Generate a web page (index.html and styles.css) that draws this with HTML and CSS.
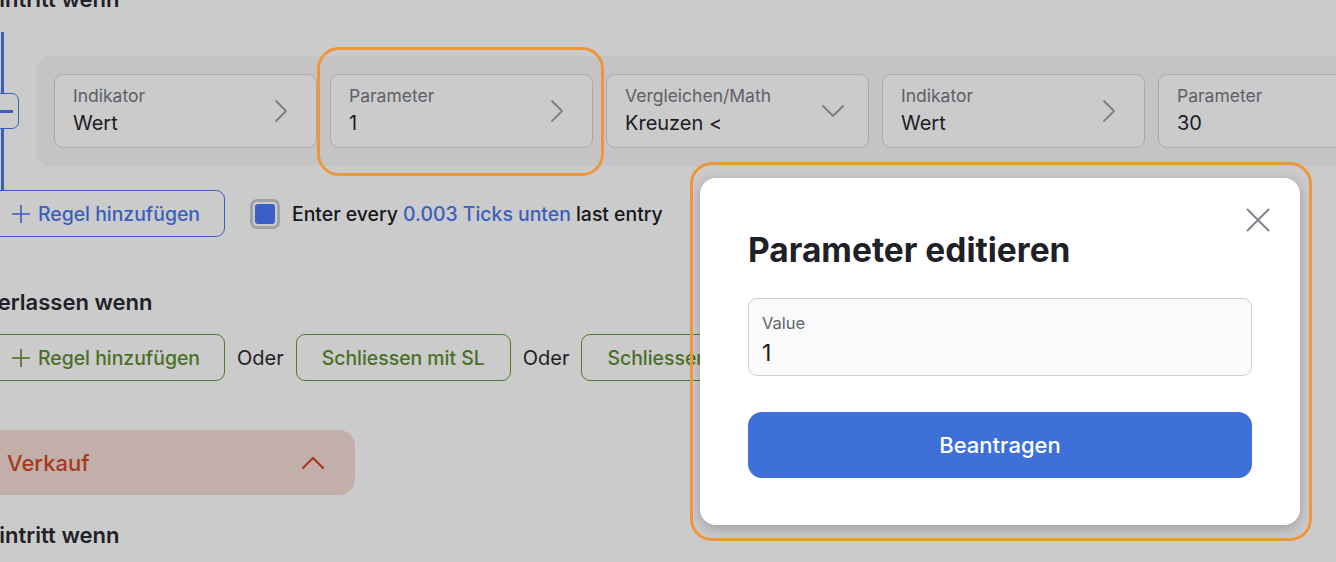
FILE: index.html
```html
<!DOCTYPE html>
<html lang="de">
<head>
<meta charset="utf-8">
<title>Parameter editieren</title>
<link rel="stylesheet" href="styles.css">
</head>
<body>
<main class="page">
  <h3 class="section-title">Eintritt wenn</h3>

  <div class="rule-group">
    <button class="remove-btn" aria-label="Entfernen"><span class="dash"></span></button>
    <div class="condition-panel">
      <div class="field">
        <div class="field-text"><span class="field-label">Indikator</span><span class="field-value">Wert</span></div>
        <svg class="chev-right" viewBox="0 0 14 24" width="14" height="24"><polyline points="2,2 12,12 2,22" /></svg>
      </div>
      <div class="field">
        <div class="field-text"><span class="field-label">Parameter</span><span class="field-value">1</span></div>
        <svg class="chev-right" viewBox="0 0 14 24" width="14" height="24"><polyline points="2,2 12,12 2,22" /></svg>
      </div>
      <div class="field field-select">
        <div class="field-text"><span class="field-label">Vergleichen/Math</span><span class="field-value">Kreuzen &lt;</span></div>
        <svg class="chev-down" viewBox="0 0 24 14" width="24" height="14"><polyline points="2,2 12,12 22,2" /></svg>
      </div>
      <div class="field">
        <div class="field-text"><span class="field-label">Indikator</span><span class="field-value">Wert</span></div>
        <svg class="chev-right" viewBox="0 0 14 24" width="14" height="24"><polyline points="2,2 12,12 2,22" /></svg>
      </div>
      <div class="field">
        <div class="field-text"><span class="field-label">Parameter</span><span class="field-value">30</span></div>
        <svg class="chev-right" viewBox="0 0 14 24" width="14" height="24"><polyline points="2,2 12,12 2,22" /></svg>
      </div>
    </div>
  </div>

  <div class="action-row">
    <button class="outline-btn btn-blue">
      <svg class="plus" viewBox="0 0 18 18" width="18" height="18"><path d="M9 0V18M0 9H18" /></svg>
      Regel hinzufügen
    </button>
    <label class="check-line">
      <span class="check-box"><span class="check-fill"></span></span>
      <span>Enter every <span class="link">0.003 Ticks unten</span> last entry</span>
    </label>
  </div>

  <h3 class="section-title exit-title">Verlassen wenn</h3>

  <div class="action-row green-row">
    <button class="outline-btn btn-green">
      <svg class="plus" viewBox="0 0 18 18" width="18" height="18"><path d="M9 0V18M0 9H18" /></svg>
      Regel hinzufügen
    </button>
    <span class="or">Oder</span>
    <button class="outline-btn btn-green btn-pad">Schliessen mit SL</button>
    <span class="or">Oder</span>
    <button class="outline-btn btn-green btn-pad">Schliessen mit TP</button>
  </div>

  <div class="side-bar">
    <span>Verkauf</span>
    <svg class="chev-up" viewBox="0 0 24 14" width="24" height="14"><polyline points="2,12 12,2 22,12" /></svg>
  </div>

  <h3 class="section-title last-title">Eintritt wenn</h3>
</main>

<div class="highlight hl-field"></div>

<div class="modal" role="dialog">
  <button class="close-btn" aria-label="Schliessen">
    <svg viewBox="0 0 26 26" width="26" height="26"><path d="M2 2L24 24M24 2L2 24" /></svg>
  </button>
  <h2 class="modal-title">Parameter editieren</h2>
  <div class="input-box">
    <span class="input-label">Value</span>
    <span class="input-value">1</span>
  </div>
  <button class="primary-btn">Beantragen</button>
</div>

<div class="highlight hl-modal"></div>
</body>
</html>
```

FILE: styles.css
```css
* { box-sizing: border-box; }

html, body {
  margin: 0;
  padding: 0;
}

body {
  width: 1336px;
  height: 562px;
  overflow: hidden;
  background: #cbcbcb;
  font-family: Inter, "Noto Sans", sans-serif;
  color: #1e2126;
  position: relative;
}

button {
  font-family: inherit;
  background: none;
  padding: 0;
  cursor: pointer;
}

.page {
  width: 1500px;
  margin: -15px 0 0 -14px;
}

.section-title {
  margin: 0;
  font-size: 22px;
  line-height: 28px;
  font-weight: 600;
  color: #1f2227;
}

.exit-title { margin: 51px 0 0 -3px; }
.last-title { margin-top: 26px; }

.rule-group {
  position: relative;
  margin: 19px 0 0 15px;
  padding: 24px 0 24px 32px;
  border-left: 3px solid #3a5fbf;
}

.remove-btn {
  position: absolute;
  left: -20px;
  top: 61px;
  width: 35px;
  height: 36px;
  border: 1px solid #3a5fbf;
  border-radius: 7px;
  background: #cbcbcb;
  display: flex;
  align-items: center;
  justify-content: flex-end;
  padding-right: 5px;
}

.remove-btn .dash {
  width: 14px;
  height: 3px;
  background: #3a5fbf;
}

.condition-panel {
  display: flex;
  gap: 13px;
  padding: 18px;
  background: #c4c4c4;
  border-radius: 14px;
}

.field {
  flex: 0 0 263px;
  height: 74px;
  border: 1px solid #aaaaaa;
  border-radius: 9px;
  background: #cbcbcb;
  display: flex;
  align-items: center;
  justify-content: space-between;
  padding: 0 28px 0 18px;
}

.field-select { padding-right: 23px; }

.field-text {
  display: flex;
  flex-direction: column;
}

.field-label {
  font-size: 17.5px;
  line-height: 20px;
  color: #5d6068;
}

.field-value {
  margin-top: 4px;
  font-size: 20px;
  line-height: 26px;
  color: #1b1c1f;
}

.chev-right polyline,
.chev-down polyline {
  fill: none;
  stroke: #7c7f86;
  stroke-width: 1.8;
  stroke-linecap: round;
  stroke-linejoin: round;
}

.action-row {
  display: flex;
  align-items: center;
  gap: 12px;
  height: 47px;
}

.green-row { margin-top: 18px; }

.outline-btn {
  height: 47px;
  display: flex;
  align-items: center;
  gap: 8px;
  font-size: 19.4px;
  font-weight: 500;
  border-radius: 9px;
  padding: 0 24px 0 25px;
  white-space: nowrap;
}

.btn-pad { padding: 0 25px; }

.btn-blue {
  border: 1px solid #3a5fbf;
  color: #3a5fbf;
}

.btn-green {
  border: 1px solid #4d7a2c;
  color: #4a6f26;
}

.plus path {
  stroke: currentColor;
  stroke-width: 1.6;
  fill: none;
}

.check-line {
  margin-left: 13px;
  display: flex;
  align-items: center;
  gap: 12px;
  font-size: 19.4px;
  font-weight: 500;
  color: #15171a;
  white-space: nowrap;
}

.check-box {
  width: 30px;
  height: 30px;
  border: 3px solid #a2a2a4;
  border-radius: 7px;
  padding: 2px;
  display: flex;
}

.check-fill {
  flex: 1;
  background: #3a60c8;
  border-radius: 3px;
}

.link { color: #3a5fbf; }

.or {
  font-size: 20px;
  color: #1e2126;
}

.side-bar {
  margin-top: 49px;
  width: 369px;
  height: 65px;
  background: #c2afa9;
  border-radius: 16px;
  display: flex;
  align-items: center;
  justify-content: space-between;
  padding: 0 30px 0 21px;
  font-size: 22px;
  font-weight: 500;
  color: #a63a20;
}

.chev-up polyline {
  fill: none;
  stroke: #a63a20;
  stroke-width: 2.2;
  stroke-linecap: round;
  stroke-linejoin: round;
}

.highlight {
  position: absolute;
  border: 3px solid #f0963a;
  pointer-events: none;
}

.hl-field {
  left: 317px;
  top: 47px;
  width: 287px;
  height: 129px;
  border-radius: 22px;
}

.hl-modal {
  left: 690px;
  top: 162px;
  width: 622px;
  height: 379px;
  border-radius: 22px;
}

.modal {
  position: absolute;
  left: 700px;
  top: 178px;
  width: 600px;
  height: 347px;
  background: #ffffff;
  border-radius: 16px;
  box-shadow: 0 4px 14px rgba(0, 0, 0, 0.22);
  padding: 52px 48px 48px;
}

.close-btn {
  position: absolute;
  right: 29px;
  top: 29px;
  width: 26px;
  height: 26px;
  border: 0;
}

.close-btn path {
  stroke: #80848c;
  stroke-width: 2;
  fill: none;
}

.modal-title {
  margin: 0;
  font-size: 33.5px;
  line-height: 40px;
  font-weight: 700;
  color: #1e2125;
}

.input-box {
  margin-top: 28px;
  height: 78px;
  border: 1px solid #cfcfcf;
  border-radius: 9px;
  background: #fafafa;
  padding: 14px 13px 0;
  display: flex;
  flex-direction: column;
}

.input-label {
  font-size: 16.5px;
  line-height: 20px;
  color: #5f636d;
}

.input-value {
  margin-top: 6px;
  font-size: 23px;
  line-height: 28px;
  color: #1b1c1f;
}

.primary-btn {
  margin-top: 36px;
  width: 100%;
  height: 66px;
  border: 0;
  border-radius: 14px;
  background: #3f70d8;
  color: #ffffff;
  font-size: 22px;
  font-weight: 500;
}
```
